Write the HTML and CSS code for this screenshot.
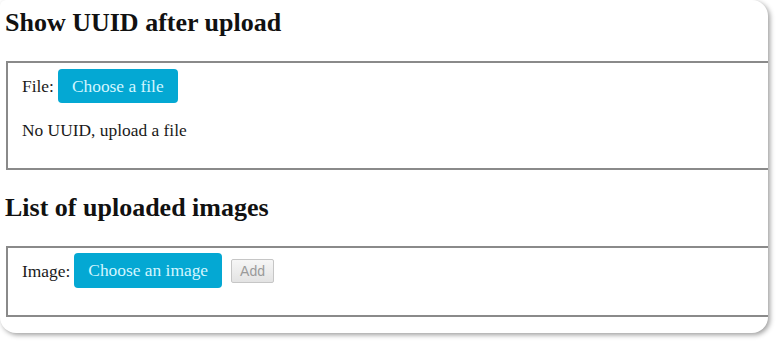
FILE: index.html
```html
<!DOCTYPE html>
<html>
<head>
<meta charset="utf-8">
<link rel="stylesheet" href="styles.css">
</head>
<body>
<div class="card">
  <h2 class="title">Show UUID after upload</h2>
  <div class="box box-file">
    <div class="row">
      <span class="label">File:</span>
      <button class="choose">Choose a file</button>
    </div>
    <p class="status">No UUID, upload a file</p>
  </div>
  <h2 class="title title-second">List of uploaded images</h2>
  <div class="box box-images">
    <div class="row">
      <span class="label">Image:</span>
      <button class="choose">Choose an image</button>
      <button class="add" disabled>Add</button>
    </div>
  </div>
</div>
</body>
</html>
```

FILE: styles.css
```css
html, body {
  margin: 0;
  padding: 0;
  background: #ffffff;
}

body {
  font-family: "Liberation Serif", "Times New Roman", serif;
  color: #1a1a1a;
  width: 780px;
  height: 345px;
  overflow: hidden;
}

.card {
  box-sizing: border-box;
  width: 768px;
  height: 333px;
  background: #ffffff;
  border-radius: 6px 16px 16px 16px;
  box-shadow: 2px 2px 5px rgba(0, 0, 0, 0.38);
  overflow: hidden;
  padding-top: 8px;
}

.title {
  margin: 0 0 0 5px;
  font-size: 26px;
  line-height: 30px;
  font-weight: bold;
  color: #111;
}

.title-second {
  margin-top: 23px;
}

.box {
  margin: 23px -20px 0 6px;
  border: 2px solid #8a8a8a;
  padding-left: 14px;
}

.box-file {
  padding-top: 6px;
  padding-bottom: 28px;
}

.box-images {
  padding-top: 5px;
  padding-bottom: 27px;
}

.row {
  display: flex;
  align-items: center;
}

.label {
  font-size: 17.4px;
  line-height: 20px;
  margin-right: 4px;
}

.choose {
  font-family: "Liberation Serif", "Times New Roman", serif;
  font-size: 17.4px;
  height: 34px;
  padding: 0 14px;
  border: none;
  border-radius: 4px;
  background: #04a8d3;
  color: #d2f6ff;
}

.box-images .choose {
  height: 35px;
}

.add {
  font-family: "Liberation Sans", Arial, sans-serif;
  font-size: 14px;
  height: 24px;
  width: 43px;
  padding: 0;
  margin-left: 9px;
  border: 1px solid #c6c6c6;
  border-radius: 2px;
  background: linear-gradient(#f6f6f6, #e3e3e3);
  color: #9a9a9a;
}

.status {
  margin: 17px 0 0 0;
  font-size: 17.4px;
  line-height: 20px;
}
```
